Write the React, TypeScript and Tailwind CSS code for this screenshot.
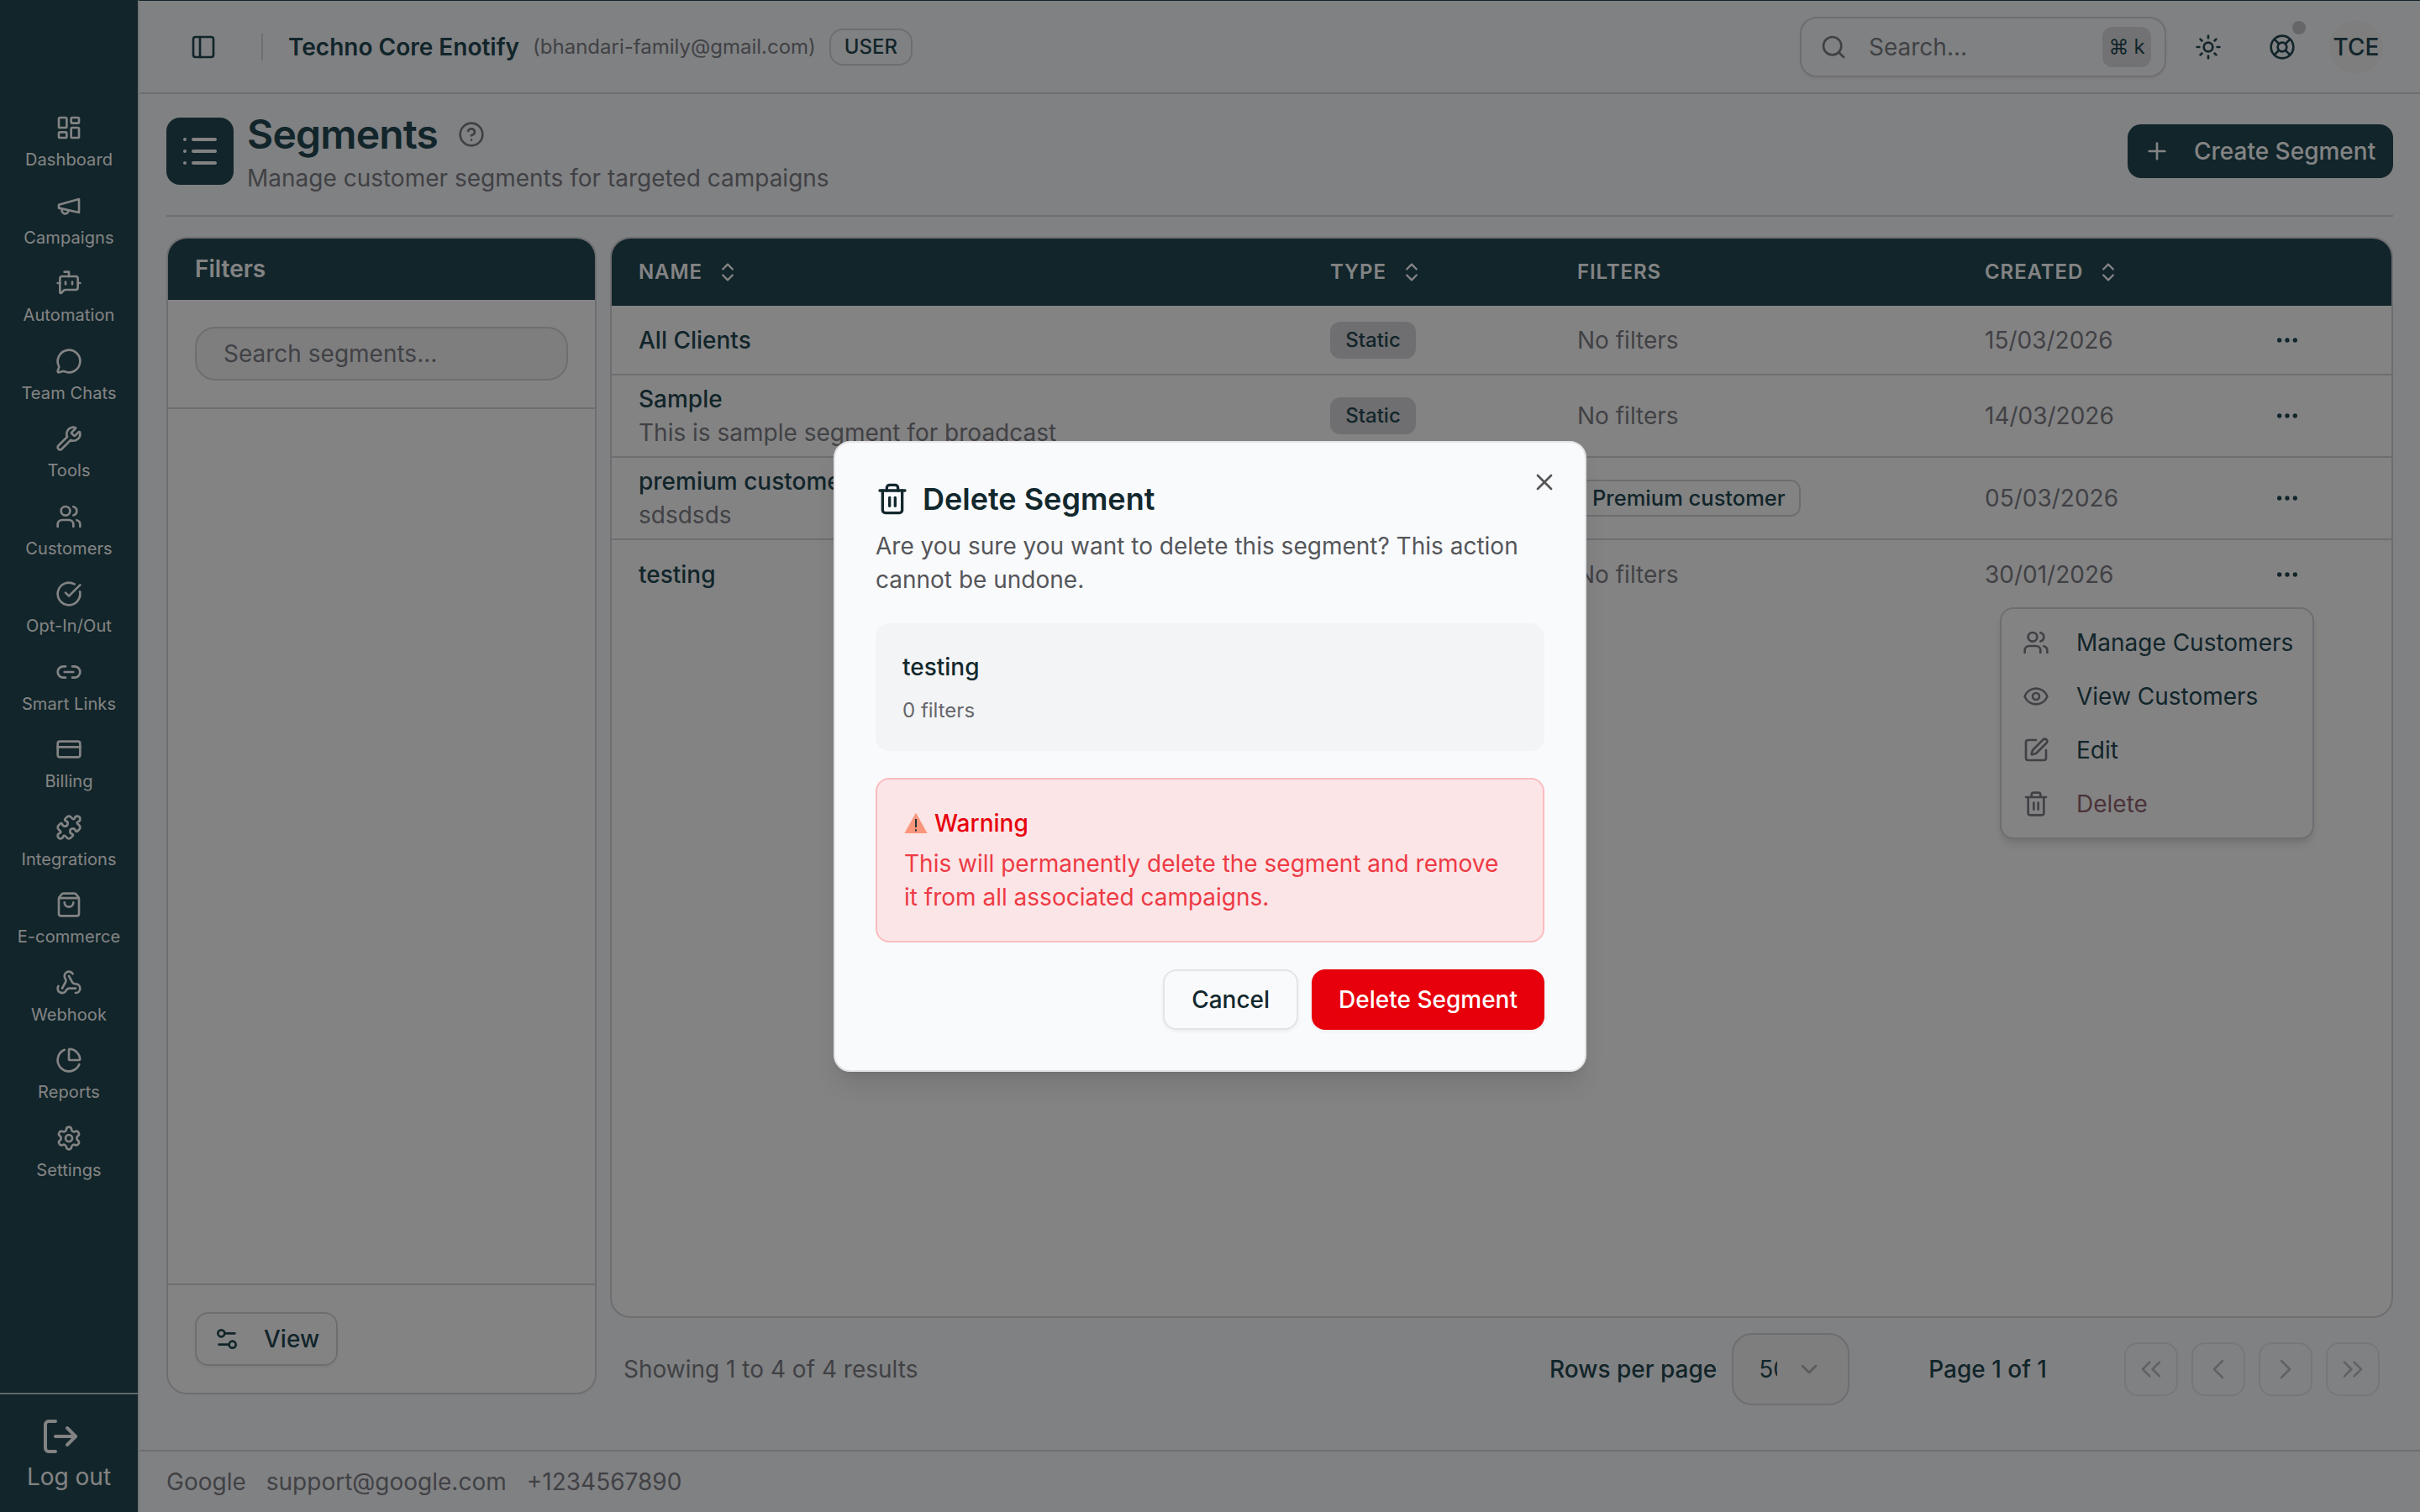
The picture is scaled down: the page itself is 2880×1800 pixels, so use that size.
import {
  LayoutDashboard, BotMessageSquare, MessageCircle, Wrench, Users, CircleCheckBig, Link2, CreditCard,
  Puzzle, ShoppingBag, Webhook, ChartPie, Settings, LogOut, PanelLeft, Search, Sun, LifeBuoy, List, CircleHelp,
  Plus, ChevronsUpDown, Ellipsis, Eye, SquarePen, Trash2, Settings2, ChevronDown, ChevronsLeft, ChevronLeft,
  ChevronRight, ChevronsRight, X,
} from "lucide-react";

function Horn({ size = 16, strokeWidth = 2, className = "" }: { size?: number; strokeWidth?: number; className?: string }) {
  return (
    <svg width={size} height={size} viewBox="0 0 24 24" fill="none" stroke="currentColor" strokeWidth={strokeWidth} strokeLinecap="round" strokeLinejoin="round" className={className}>
      <path d="m3 11 18-5v12L3 14v-3z" />
      <path d="M11.6 16.8a3 3 0 1 1-5.8-1.6" />
    </svg>
  );
}

const nav = [
  [LayoutDashboard, "Dashboard"], [Horn, "Campaigns"], [BotMessageSquare, "Automation"], [MessageCircle, "Team Chats"],
  [Wrench, "Tools"], [Users, "Customers"], [CircleCheckBig, "Opt-In/Out"], [Link2, "Smart Links"], [CreditCard, "Billing"],
  [Puzzle, "Integrations"], [ShoppingBag, "E-commerce"], [Webhook, "Webhook"], [ChartPie, "Reports"], [Settings, "Settings"],
] as const;

const rowGrid = "grid grid-cols-[427.5px_147px_242.5px_164px_32px_1fr] items-center";

function Sidebar() {
  return (
    <aside className="flex w-[82px] shrink-0 flex-col bg-[#1b434a] pt-[68px] text-white">
      {nav.map(([Icon, label]) => (
        <div key={label} className="flex h-[46.25px] flex-col items-center gap-[3.5px]">
          <Icon size={16} strokeWidth={2} className="shrink-0" />
          <span className="text-[10px] leading-[15px] font-normal tracking-[0.05px] whitespace-nowrap">{label}</span>
        </div>
      ))}
      <div className="mt-auto flex h-[71px] flex-col border-t border-white/70 pt-[13px]">
        <LogOut size={24} strokeWidth={2} className="ml-[24px]" />
        <span className="mt-[2px] text-center text-sm leading-5">Log out</span>
      </div>
    </aside>
  );
}

function Header() {
  return (
    <header className="flex h-[55.5px] shrink-0 items-center border-b border-[#d4d4d8] pr-[22px] pl-[30px]">
      <PanelLeft size={16} className="text-[#1b434a]" />
      <div className="mr-[15px] ml-[26.5px] h-4 w-px bg-[#d4d4d8]" />
      <span className="text-sm font-semibold text-[#1b434a]">Techno Core Enotify</span>
      <span className="ml-2 text-xs text-[#7a7b80]">(bhandari-family@gmail.com)</span>
      <span className="ml-2 rounded-lg border border-[#d4d4d8] px-2 py-0.5 text-xs font-medium text-[#1b434a]">USER</span>
      <div className="ml-auto flex h-9 w-[218px] items-center rounded-[10px] border border-[#d4d4d8] pr-2 pl-[11px] shadow-xs">
        <Search size={16} className="text-[#7a7b80]" />
        <span className="ml-[13px] text-sm text-[#7a7b80]">Search...</span>
        <span className="ml-auto flex h-6 w-[29px] items-center justify-center gap-[3px] rounded-md bg-[#dcdcde] text-xs text-[#1b434a]">⌘<span>k</span></span>
      </div>
      <div className="ml-[9px] flex w-8 justify-center"><Sun size={16} className="text-[#1b434a]" /></div>
      <div className="relative ml-3 flex w-8 justify-center">
        <LifeBuoy size={16} className="text-[#1b434a]" />
        <span className="absolute top-[-7.5px] right-[2px] size-2 rounded-full bg-[#c4c4c8]" />
      </div>
      <div className="ml-3 flex size-8 items-center justify-center rounded-full bg-[#f4f4f5] text-sm font-medium text-[#1b434a]">TCE</div>
    </header>
  );
}

function TitleBar() {
  return (
    <div className="flex items-center justify-between border-b border-[#d4d4d8] pb-3">
      <div className="flex items-center gap-2">
        <div className="flex size-10 items-center justify-center rounded-lg bg-[#1b434a] text-white"><List size={24} /></div>
        <div>
          <div className="flex items-center gap-3">
            <h1 className="text-2xl leading-8 font-semibold tracking-[-0.4px] text-[#1b434a]">Segments</h1>
            <CircleHelp size={16} className="text-[#7a7b80]" />
          </div>
          <p className="text-sm leading-5 text-[#7a7b80]">Manage customer segments for targeted campaigns</p>
        </div>
      </div>
      <button className="flex h-8 w-[158px] items-center gap-[14px] rounded-lg bg-[#1b434a] pl-[9.5px] text-sm font-medium whitespace-nowrap text-white">
        <Plus size={16} />Create Segment
      </button>
    </div>
  );
}

function FiltersCard() {
  return (
    <div className="mb-[33px] flex w-[256px] shrink-0 flex-col overflow-hidden rounded-xl border border-[#d4d4d8] bg-white">
      <div className="bg-[#1b434a] px-4 pt-2 pb-[8.5px] text-sm leading-5 font-semibold text-white">Filters</div>
      <div className="border-b border-[#d4d4d8] p-4">
        <div className="flex h-8 items-center rounded-xl border border-[#d4d4d8] bg-[#f4f4f5] px-4 text-sm text-[#7a7b80]">Search segments...</div>
      </div>
      <div className="flex-1" />
      <div className="border-t border-[#d4d4d8] p-4">
        <button className="flex h-8 w-[85px] items-center gap-[14px] rounded-lg border border-[#d4d4d8] pl-[10px] text-sm font-medium text-[#1b434a] shadow-xs">
          <Settings2 size={16} />View
        </button>
      </div>
    </div>
  );
}

function Head({ label, sort = true }: { label: string; sort?: boolean }) {
  return (
    <div className="flex items-center gap-2 text-xs font-semibold tracking-[0.45px] text-white">
      {label}{sort && <ChevronsUpDown size={14} />}
    </div>
  );
}

function Static() {
  return <span className="flex h-[22px] w-[51px] items-center justify-center rounded-md bg-[#d6d6d8] text-xs font-medium text-[#1b434a]">Static</span>;
}

function Name({ name, sub }: { name: string; sub?: string }) {
  return (
    <div className="pl-4 text-sm leading-5">
      <div className="font-medium text-[#1b434a]">{name}</div>
      {sub && <div className="text-[#7a7b80]">{sub}</div>}
    </div>
  );
}

const muted = "text-sm text-[#7a7b80]";
const dots = <div className="flex justify-center text-[#1b434a]"><Ellipsis size={16} /></div>;

function Menu() {
  const items = [[Users, "Manage Customers"], [Eye, "View Customers"], [SquarePen, "Edit"]] as const;
  return (
    <div className="absolute top-[40px] right-0 w-[187px] rounded-lg border border-[#d4d4d8] bg-white p-1 shadow-md">
      {items.map(([Icon, label]) => (
        <div key={label} className="flex h-8 items-center gap-4 pl-[8.5px] text-sm text-[#1b434a]">
          <Icon size={16} className="shrink-0 text-[#7a7b80]" />{label}
        </div>
      ))}
      <div className="flex h-8 items-center gap-4 pl-[8.5px] text-sm text-[#8f5f68]">
        <Trash2 size={16} className="shrink-0 text-[#7a7b80]" />Delete
      </div>
    </div>
  );
}

function TableCard() {
  return (
    <div className="flex flex-1 flex-col overflow-visible rounded-xl border border-[#d4d4d8] bg-white">
      <div className={`${rowGrid} h-[40px] rounded-t-[11px] bg-[#1b434a]`}>
        <div className="pl-4"><Head label="NAME" /></div>
        <Head label="TYPE" />
        <Head label="FILTERS" sort={false} />
        <Head label="CREATED" />
      </div>
      <div className={`${rowGrid} h-[41.5px] border-b border-[#d4d4d8]`}>
        <Name name="All Clients" /><Static /><span className={muted}>No filters</span><span className={muted}>15/03/2026</span>{dots}
      </div>
      <div className={`${rowGrid} h-[49px] border-b border-[#d4d4d8]`}>
        <Name name="Sample" sub="This is sample segment for broadcast" /><Static /><span className={muted}>No filters</span><span className={muted}>14/03/2026</span>{dots}
      </div>
      <div className={`${rowGrid} h-[49px] border-b border-[#d4d4d8]`}>
        <Name name="premium customers" sub="sdsdsds" /><span />
        <span className="w-fit rounded-md border border-[#d4d4d8] px-2 py-0.5 text-[12.75px] leading-4 font-medium text-[#1b434a]">Premium customer</span>
        <span className={muted}>05/03/2026</span>{dots}
      </div>
      <div className={`${rowGrid} relative h-[41px]`}>
        <Name name="testing" /><span /><span className={muted}>No filters</span><span className={muted}>30/01/2026</span>
        <div className="relative flex h-full items-center justify-center text-[#1b434a]"><Ellipsis size={16} /><Menu /></div>
      </div>
    </div>
  );
}

function Pager() {
  return (
    <div className="mt-[9px] mb-[26.5px] flex h-[43px] items-center pr-2 pl-2 text-sm">
      <span className="text-[#7a7b80]">Showing 1 to 4 of 4 results</span>
      <span className="ml-auto font-medium text-[#1b434a]">Rows per page</span>
      <div className="ml-[9px] flex h-[43px] w-[70px] items-center rounded-xl border border-[#d4d4d8] bg-[#f4f4f5] pl-[15px]">
        <span className="w-[11px] overflow-hidden text-[#1b434a]">50</span>
        <ChevronDown size={16} className="ml-[11px] text-[#b0b0b4]" />
      </div>
      <span className="ml-[47px] font-medium text-[#1b434a]">Page 1 of 1</span>
      <div className="ml-[46px] flex gap-2 opacity-50">
        {[ChevronsLeft, ChevronLeft, ChevronRight, ChevronsRight].map((Icon, i) => (
          <div key={i} className="flex size-8 items-center justify-center rounded-lg border border-[#d4d4d8] text-[#7a7b80]"><Icon size={20} strokeWidth={1.5} /></div>
        ))}
      </div>
    </div>
  );
}

function Dialog() {
  return (
    <div className="absolute inset-0 flex items-center justify-center bg-[#07080a]/50">
      <div className="relative w-[448px] rounded-[10px] border border-[#e4e4e7] bg-[#f9fafc] px-6 pt-[19.5px] pb-6 shadow-lg">
        <X size={16} className="absolute top-[15.5px] right-[16px] text-[#555]" />
        <div className="flex items-center gap-2">
          <Trash2 size={20} className="text-[#12282d]" />
          <h2 className="text-lg leading-7 font-semibold text-[#12282d]">Delete Segment</h2>
        </div>
        <p className="mt-[4px] text-sm leading-5 text-[#55565a]">Are you sure you want to delete this segment? This action cannot be undone.</p>
        <div className="mt-[16px] rounded-lg bg-[#f3f4f6] p-4">
          <div className="text-sm leading-5 font-medium text-[#12282d]">testing</div>
          <div className="mt-2 text-xs leading-4 text-[#66676b]">0 filters</div>
        </div>
        <div className="mt-4 rounded-lg border border-[#fcbcc0] bg-[#fbe5e7] px-4 pt-4 pb-4">
          <div className="flex items-center gap-[4px] text-sm leading-5 font-medium text-[#e7000b]">
            <svg width="14" height="14" viewBox="0 0 14 14" className="shrink-0">
              <path d="M7 .8 13.8 13H.2Z" fill="#f9967b" />
              <path d="M7 4.5v5M7 10.6v1.2" stroke="#27323a" strokeWidth="1" />
            </svg>
            Warning
          </div>
          <p className="mt-1 text-sm leading-5 text-[#ee3a44]">This will permanently delete the segment and remove it from all associated campaigns.</p>
        </div>
        <div className="mt-4 flex justify-end gap-2">
          <button className="h-9 rounded-lg border border-[#e4e4e7] bg-[#f9fafc] px-4 text-sm font-medium text-[#12282d] shadow-xs">Cancel</button>
          <button className="h-9 rounded-lg bg-[#e7000b] px-4 text-sm font-medium text-white shadow-xs">Delete Segment</button>
        </div>
      </div>
    </div>
  );
}

export default function App() {
  return (
    <div className="relative flex h-[900px] w-[1440px] overflow-hidden bg-[#f9fafc] font-[Inter,sans-serif] [zoom:2]">
      <Sidebar />
      <main className="flex min-w-0 flex-1 flex-col border-t-[0.5px] border-l border-t-[#1b434a] border-l-[#e4e4e7]">
        <Header />
        <section className="flex min-h-0 flex-1 flex-col px-4 pt-2">
          <TitleBar />
          <div className="mt-3 flex min-h-0 flex-1 gap-[8px]">
            <FiltersCard />
            <div className="flex min-w-0 flex-1 flex-col">
              <TableCard />
              <Pager />
            </div>
          </div>
        </section>
        <footer className="flex h-[37px] shrink-0 items-center gap-3 border-t border-[#d4d4d8] px-4 text-sm text-[#7a7b80]">
          <span>Google</span><span>support@google.com</span><span>+1234567890</span>
        </footer>
      </main>
      <Dialog />
    </div>
  );
}
